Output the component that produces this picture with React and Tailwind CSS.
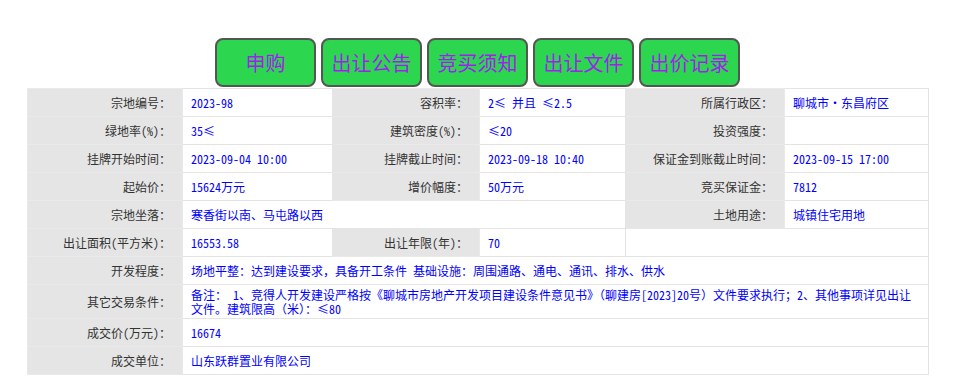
const BUTTONS = ["申购", "出让公告", "竞买须知", "出让文件", "出价记录"]

const lbl = "bg-[#e5e5e5] text-right pr-[11px] text-[#333] border border-[#e9e9e9]"
const val = "bg-white text-left pl-[8px] pr-[10px] text-[#0000ff] border border-[#e4e4e4]"

const Row = ({ cells, h = "h-[28px]" }) => (
    <tr className={h}>
        {cells.map((c, i) => (
            <td key={i} colSpan={c.span || 1} className={c.label ? lbl : val}>
                {c.text}
            </td>
        ))}
    </tr>
)

const App = () => {
    return (
        <div className="w-[957px] h-[392px] bg-white overflow-hidden">
            {/* buttons */}
            <div className="flex gap-[5px] pt-[38px] pl-[215px]" style={{ fontFamily: '"Noto Sans CJK SC", "Noto Sans", sans-serif' }}>
                {BUTTONS.map(b => (
                    <button
                        key={b}
                        className="w-[101px] h-[49px] bg-[#2dd64f] border-2 border-[#555] rounded-[8px] text-[#a020f0] text-[20px] leading-none"
                    >
                        {b}
                    </button>
                ))}
            </div>

            {/* table */}
            <table
                className="ml-[27px] mt-[1px] w-[901px] table-fixed border-collapse text-[12px] leading-[14px]"
                style={{ fontFamily: '"Noto Sans Mono CJK SC", "Noto Sans CJK SC", "Liberation Mono", monospace' }}
            >
                <colgroup>
                    <col className="w-[155px]" />
                    <col className="w-[150px]" />
                    <col className="w-[147px]" />
                    <col className="w-[146px]" />
                    <col className="w-[159px]" />
                    <col className="w-[144px]" />
                </colgroup>
                <tbody>
                    <Row cells={[
                        { label: true, text: "宗地编号：" }, { text: "2023-98" },
                        { label: true, text: "容积率：" }, { text: "2≤ 并且 ≤2.5" },
                        { label: true, text: "所属行政区：" }, { text: "聊城市·东昌府区" },
                    ]} />
                    <Row cells={[
                        { label: true, text: "绿地率(%)：" }, { text: "35≤" },
                        { label: true, text: "建筑密度(%)：" }, { text: "≤20" },
                        { label: true, text: "投资强度：" }, { text: "" },
                    ]} />
                    <Row cells={[
                        { label: true, text: "挂牌开始时间：" }, { text: "2023-09-04 10:00" },
                        { label: true, text: "挂牌截止时间：" }, { text: "2023-09-18 10:40" },
                        { label: true, text: "保证金到账截止时间：" }, { text: "2023-09-15 17:00" },
                    ]} />
                    <Row cells={[
                        { label: true, text: "起始价：" }, { text: "15624万元" },
                        { label: true, text: "增价幅度：" }, { text: "50万元" },
                        { label: true, text: "竞买保证金：" }, { text: "7812" },
                    ]} />
                    <Row cells={[
                        { label: true, text: "宗地坐落：" }, { text: "寒香街以南、马屯路以西", span: 3 },
                        { label: true, text: "土地用途：" }, { text: "城镇住宅用地" },
                    ]} />
                    <Row cells={[
                        { label: true, text: "出让面积(平方米)：" }, { text: "16553.58" },
                        { label: true, text: "出让年限(年)：" }, { text: "70" },
                        { text: "", span: 2 },
                    ]} />
                    <Row cells={[
                        { label: true, text: "开发程度：" },
                        { text: "场地平整：达到建设要求，具备开工条件 基础设施：周围通路、通电、通讯、排水、供水", span: 5 },
                    ]} />
                    <Row h="h-[34px]" cells={[
                        { label: true, text: "其它交易条件：" },
                        { text: "备注： 1、竞得人开发建设严格按《聊城市房地产开发项目建设条件意见书》（聊建房[2023]20号）文件要求执行；2、其他事项详见出让文件。建筑限高（米）：≤80", span: 5 },
                    ]} />
                    <Row cells={[
                        { label: true, text: "成交价(万元)：" }, { text: "16674", span: 5 },
                    ]} />
                    <Row cells={[
                        { label: true, text: "成交单位：" }, { text: "山东跃群置业有限公司", span: 5 },
                    ]} />
                </tbody>
            </table>
        </div>
    )
}

export default App
